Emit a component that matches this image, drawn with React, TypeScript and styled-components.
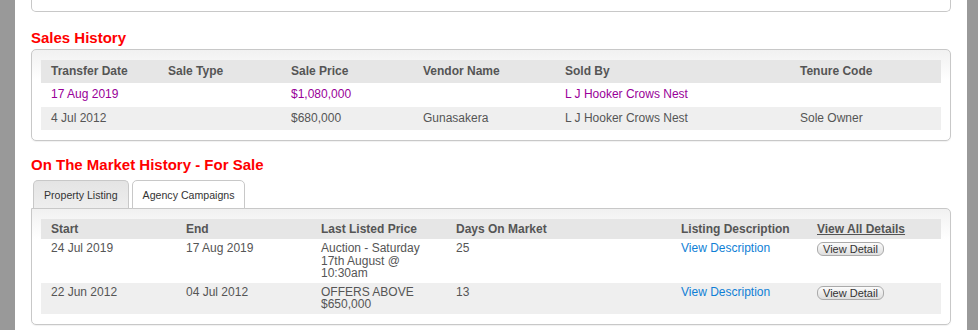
import styled, { createGlobalStyle } from "styled-components";

const GlobalStyle = createGlobalStyle`
  body {
    margin: 0;
    font-family: "Liberation Sans", Arial, sans-serif;
    font-size: 12px;
    color: #555;
  }
`;

type TSale = {
  date: string;
  type: string;
  price: string;
  vendor: string;
  agent: string;
  tenure: string;
  recent?: boolean;
};

type TListing = {
  start: string;
  end: string;
  price: string[];
  days: string;
};

const sales: TSale[] = [
  {
    date: "17 Aug 2019",
    type: "",
    price: "$1,080,000",
    vendor: "",
    agent: "L J Hooker Crows Nest",
    tenure: "",
    recent: true,
  },
  {
    date: "4 Jul 2012",
    type: "",
    price: "$680,000",
    vendor: "Gunasakera",
    agent: "L J Hooker Crows Nest",
    tenure: "Sole Owner",
  },
];

const listings: TListing[] = [
  {
    start: "24 Jul 2019",
    end: "17 Aug 2019",
    price: ["Auction - Saturday", "17th August @", "10:30am"],
    days: "25",
  },
  {
    start: "22 Jun 2012",
    end: "04 Jul 2012",
    price: ["OFFERS ABOVE", "$650,000"],
    days: "13",
  },
];

const App = (): JSX.Element => {
  return (
    <>
      <GlobalStyle />
      <Page>
        <Content>
          <TopBox />

          <SectionTitle>Sales History</SectionTitle>
          <Panel>
            <SalesGrid>
              <HeadCell>Transfer Date</HeadCell>
              <HeadCell>Sale Type</HeadCell>
              <HeadCell>Sale Price</HeadCell>
              <HeadCell>Vendor Name</HeadCell>
              <HeadCell>Sold By</HeadCell>
              <HeadCell>Tenure Code</HeadCell>
              {sales.map((s, i) => (
                <SaleRow key={s.date} $alt={i % 2 === 1} $recent={s.recent}>
                  <Cell>{s.date}</Cell>
                  <Cell>{s.type}</Cell>
                  <Cell>{s.price}</Cell>
                  <Cell>{s.vendor}</Cell>
                  <Cell>{s.agent}</Cell>
                  <Cell>{s.tenure}</Cell>
                </SaleRow>
              ))}
            </SalesGrid>
          </Panel>

          <SectionTitle $gap={15}>On The Market History - For Sale</SectionTitle>
          <Tabs>
            <Tab $active>Property Listing</Tab>
            <Tab>Agency Campaigns</Tab>
          </Tabs>
          <Panel $tabbed>
            <ListingGrid>
              <ListHead>Start</ListHead>
              <ListHead>End</ListHead>
              <ListHead>Last Listed Price</ListHead>
              <ListHead>Days On Market</ListHead>
              <ListHead>Listing Description</ListHead>
              <ListHead>
                <u>View All Details</u>
              </ListHead>
              {listings.map((l, i) => (
                <ListingRow key={l.start} $alt={i % 2 === 1}>
                  <ListCell>{l.start}</ListCell>
                  <ListCell>{l.end}</ListCell>
                  <ListCell>
                    {l.price.map((line) => (
                      <div key={line}>{line}</div>
                    ))}
                  </ListCell>
                  <ListCell>{l.days}</ListCell>
                  <ListCell>
                    <DescLink href="#">View Description</DescLink>
                  </ListCell>
                  <ListCell>
                    <DetailButton type="button">View Detail</DetailButton>
                  </ListCell>
                </ListingRow>
              ))}
            </ListingGrid>
          </Panel>
        </Content>
      </Page>
    </>
  );
};

const Page = styled.div`
  background: #999;
  padding: 0 11px 0 15px;
  min-height: 100vh;
`;

const Content = styled.div`
  background: #fff;
  min-height: 100vh;
  padding: 0 16px;
  display: flex;
  flex-direction: column;
`;

const TopBox = styled.div`
  height: 11px;
  border: 1px solid #c8c8c8;
  border-top: none;
  border-radius: 0 0 5px 5px;
`;

const SectionTitle = styled.h2<{ $gap?: number }>`
  margin: ${({ $gap }) => $gap ?? 17}px 0 0;
  height: 18px;
  font-size: 15px;
  line-height: 18px;
  font-weight: bold;
  color: #f00;
`;

const Panel = styled.div<{ $tabbed?: boolean }>`
  margin-top: ${({ $tabbed }) => ($tabbed ? 0 : 2)}px;
  border: 1px solid #c8c8c8;
  border-radius: ${({ $tabbed }) => ($tabbed ? "0 5px 5px 5px" : "5px")};
  background: linear-gradient(#f1f1f1, #fff 30px);
  box-shadow: 0 1px 1px rgba(0, 0, 0, 0.06);
  padding: 10px 9px;
`;

const SalesGrid = styled.div`
  display: grid;
  grid-template-columns: 117px 123px 132px 142px 235px 1fr;
`;

const HeadCell = styled.div`
  background: #e6e6e6;
  font-weight: bold;
  color: #555;
  padding: 5px 10px;
  line-height: 13px;
  white-space: nowrap;
`;

const SaleRow = styled.div<{ $alt?: boolean; $recent?: boolean }>`
  display: contents;

  & > div {
    background: ${({ $alt }) => ($alt ? "#efefef" : "#fff")};
    color: ${({ $recent }) => ($recent ? "#990099" : "#555")};
  }
`;

const Cell = styled.div`
  padding: 5px 10px;
  line-height: 13.5px;
  white-space: nowrap;
`;

const Tabs = styled.div`
  margin-top: 6px;
  display: flex;
  gap: 3px;
  padding-left: 2px;
`;

const Tab = styled.div<{ $active?: boolean }>`
  height: 27px;
  margin-bottom: -1px;
  padding: 0 10px;
  display: flex;
  align-items: center;
  font-size: 10.6px;
  color: #333;
  border: 1px solid #c8c8c8;
  border-bottom: ${({ $active }) => ($active ? "none" : "1px solid #c8c8c8")};
  border-radius: 5px 5px 0 0;
  background: ${({ $active }) =>
    $active ? "linear-gradient(#e4e4e4, #eeeeee)" : "#fff"};
  position: relative;
  z-index: ${({ $active }) => ($active ? 1 : 0)};
`;

const ListingGrid = styled.div`
  display: grid;
  grid-template-columns: 135px 135px 135px 225px 136px 1fr;
`;

const ListHead = styled.div`
  background: #e6e6e6;
  font-weight: bold;
  color: #555;
  padding: 4px 10px 3px;
  line-height: 13px;
  white-space: nowrap;

  u {
    text-decoration-thickness: 1px;
  }
`;

const ListingRow = styled.div<{ $alt?: boolean }>`
  display: contents;

  & > div {
    background: ${({ $alt }) => ($alt ? "#efefef" : "#fff")};
  }
`;

const ListCell = styled.div`
  padding: 3px 10px 3px;
  line-height: 12.5px;
  color: #555;
  white-space: nowrap;
`;

const DescLink = styled.a`
  color: #0f7fd6;
  text-decoration: none;
`;

const DetailButton = styled.button`
  display: block;
  height: 14px;
  margin: 0;
  padding: 0 5px;
  font-family: "Liberation Sans", Arial, sans-serif;
  font-size: 11px;
  line-height: 12px;
  color: #333;
  border: 1px solid #aaa;
  border-radius: 6px;
  background: linear-gradient(#fbfbfb, #dedede);
`;

export default App;
